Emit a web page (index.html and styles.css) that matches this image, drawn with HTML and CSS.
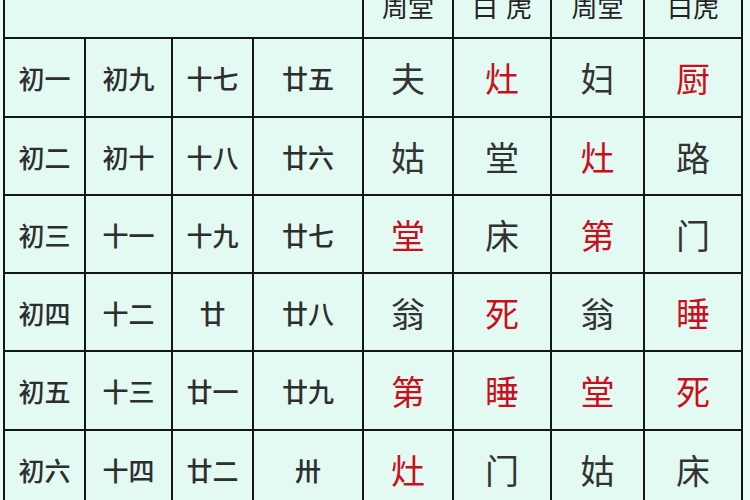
FILE: index.html
```html
<!DOCTYPE html>
<html lang="zh-CN">
<head>
<meta charset="utf-8">
<title>周堂白虎</title>
<link rel="stylesheet" href="styles.css">
</head>
<body>
<table class="grid">
  <colgroup>
    <col class="c1"><col class="c2"><col class="c3"><col class="c4">
    <col class="c5"><col class="c6"><col class="c7"><col class="c8">
  </colgroup>
  <thead>
    <tr class="head">
      <th colspan="4" class="blank"></th>
      <th>周堂</th>
      <th class="wide">白虎</th>
      <th>周堂</th>
      <th>白虎</th>
    </tr>
  </thead>
  <tbody>
    <tr class="tall">
      <td class="day">初一</td><td class="day">初九</td><td class="day">十七</td><td class="day">廿五</td>
      <td class="mark">夫</td><td class="mark red">灶</td><td class="mark">妇</td><td class="mark red">厨</td>
    </tr>
    <tr>
      <td class="day">初二</td><td class="day">初十</td><td class="day">十八</td><td class="day">廿六</td>
      <td class="mark">姑</td><td class="mark">堂</td><td class="mark red">灶</td><td class="mark">路</td>
    </tr>
    <tr>
      <td class="day">初三</td><td class="day">十一</td><td class="day">十九</td><td class="day">廿七</td>
      <td class="mark red">堂</td><td class="mark">床</td><td class="mark red">第</td><td class="mark">门</td>
    </tr>
    <tr>
      <td class="day">初四</td><td class="day">十二</td><td class="day">廿</td><td class="day">廿八</td>
      <td class="mark">翁</td><td class="mark red">死</td><td class="mark">翁</td><td class="mark red">睡</td>
    </tr>
    <tr class="tall">
      <td class="day">初五</td><td class="day">十三</td><td class="day">廿一</td><td class="day">廿九</td>
      <td class="mark red">第</td><td class="mark red">睡</td><td class="mark red">堂</td><td class="mark red">死</td>
    </tr>
    <tr>
      <td class="day">初六</td><td class="day">十四</td><td class="day">廿二</td><td class="day">卅</td>
      <td class="mark red">灶</td><td class="mark">门</td><td class="mark">姑</td><td class="mark">床</td>
    </tr>
  </tbody>
</table>
</body>
</html>
```
FILE: styles.css
```css
html, body {
  margin: 0;
  padding: 0;
  background: #eafcf5;
  overflow: hidden;
}

body {
  width: 750px;
  height: 500px;
  font-family: "Noto Sans CJK SC", "Noto Sans CJK TC", sans-serif;
  color: #2b2b2b;
}

.grid {
  border-collapse: collapse;
  table-layout: fixed;
  width: 740px;
  margin: -22px 0 0 3px;
  background: #e3faf2;
}

.c1 { width: 81px; }
.c2 { width: 87px; }
.c3 { width: 81px; }
.c4 { width: 110px; }
.c5 { width: 90px; }
.c6 { width: 98px; }
.c7 { width: 93px; }
.c8 { width: 98px; }

.grid th,
.grid td {
  border: 2px solid #151515;
  padding: 0;
  text-align: center;
  vertical-align: middle;
}

.head th {
  height: 59px;
  font-size: 26px;
  font-weight: 400;
  line-height: 1;
  vertical-align: bottom;
  padding-bottom: 18px;
  box-sizing: border-box;
  color: #222;
}

.head .wide {
  letter-spacing: 8px;
  text-indent: 8px;
}

.grid tbody tr {
  height: 78px;
}

.grid tbody tr.tall {
  height: 79px;
}

.day {
  font-size: 26px;
  font-weight: 500;
  color: #2e2e2e;
}

.mark {
  font-size: 34px;
  font-weight: 400;
  color: #333;
}

.mark.red {
  color: #c8101e;
}
```
